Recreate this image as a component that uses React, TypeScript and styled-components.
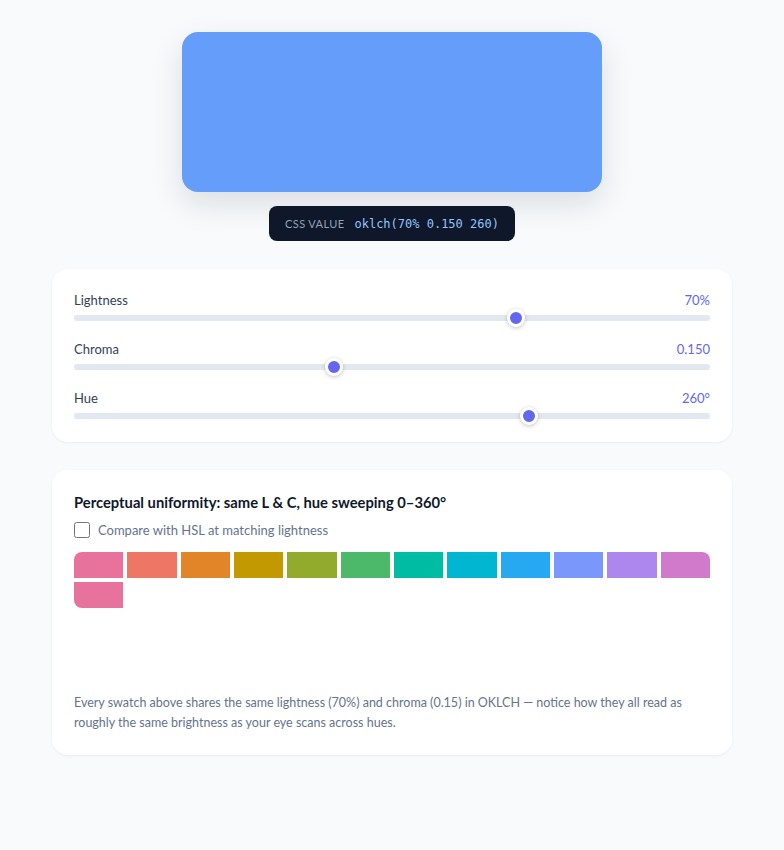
import { useState } from "react";
import styled, { createGlobalStyle } from "styled-components";

const GlobalStyle = createGlobalStyle`
  * {
    box-sizing: border-box;
  }
  body {
    margin: 0;
    background: #f8fafc;
    font-family: Lato, "Noto Sans", sans-serif;
    color: #0f172a;
  }
`;

const Page = styled.main`
  width: 680px;
  margin: 0 auto;
  padding: 32px 0 40px;
  display: flex;
  flex-direction: column;
  align-items: center;
`;

const Preview = styled.div<{ $color: string }>`
  width: 420px;
  height: 160px;
  border-radius: 16px;
  background: ${(p) => p.$color};
  box-shadow: 0 12px 32px rgba(15, 23, 42, 0.12);
`;

const ValueChip = styled.div`
  margin-top: 14px;
  height: 35px;
  padding: 0 16px;
  display: flex;
  align-items: center;
  gap: 10px;
  background: #0f172a;
  border-radius: 8px;
`;

const ChipLabel = styled.span`
  font-size: 11px;
  letter-spacing: 0.4px;
  text-transform: uppercase;
  color: #94a3b8;
`;

const ChipValue = styled.code`
  font-family: "DejaVu Sans Mono", monospace;
  font-size: 12px;
  color: #93c5fd;
`;

const Card = styled.section`
  align-self: stretch;
  margin-top: 28px;
  background: #ffffff;
  border-radius: 16px;
  padding: 22px;
  box-shadow: 0 1px 3px rgba(15, 23, 42, 0.06);
`;

const SliderCard = styled(Card)`
  padding-bottom: 17px;
`;

const SliderList = styled.div`
  display: flex;
  flex-direction: column;
  gap: 13px;
`;

const SliderRow = styled.label`
  display: flex;
  flex-direction: column;
`;

const SliderHead = styled.div`
  display: flex;
  justify-content: space-between;
  align-items: center;
  height: 18px;
  font-size: 13px;
`;

const SliderName = styled.span`
  color: #334155;
`;

const SliderValue = styled.span`
  color: #6366f1;
`;

const Range = styled.input`
  -webkit-appearance: none;
  appearance: none;
  width: 100%;
  height: 18px;
  margin: 0;
  background: transparent;
  cursor: pointer;

  &::-webkit-slider-runnable-track {
    height: 6px;
    border-radius: 3px;
    background: #e2e8f0;
  }
  &::-webkit-slider-thumb {
    -webkit-appearance: none;
    width: 18px;
    height: 18px;
    margin-top: -6px;
    border-radius: 50%;
    background: #6366f1;
    border: 3px solid #ffffff;
    box-shadow: 0 1px 4px rgba(15, 23, 42, 0.25);
  }
`;

const Title = styled.h3`
  margin: 0;
  font-size: 14.75px;
  line-height: 20px;
  font-weight: 700;
  color: #0f172a;
`;

const Toggle = styled.label`
  margin-top: 8px;
  display: flex;
  align-items: center;
  gap: 8px;
  height: 20px;
  font-size: 13px;
  color: #64748b;
  cursor: pointer;
`;

const Check = styled.input`
  width: 16px;
  height: 16px;
  margin: 0;
  accent-color: #6366f1;
`;

const SwatchArea = styled.div`
  margin-top: 12px;
  min-height: 128px;
`;

const SwatchGrid = styled.div`
  display: grid;
  grid-template-columns: repeat(12, 1fr);
  gap: 4px;
  border-radius: 8px;
  overflow: hidden;
`;

const Swatch = styled.div`
  height: 26px;
`;

const Note = styled.p`
  margin: 13px 0 0;
  font-size: 12.5px;
  line-height: 20px;
  color: #64748b;
`;

const hues = Array.from({ length: 13 }, (_, i) => i * 30);

export default function App() {
  const [l, setL] = useState(70);
  const [c, setC] = useState(0.15);
  const [h, setH] = useState(260);
  const [hsl, setHsl] = useState(false);

  const css = `oklch(${l}% ${c.toFixed(3)} ${h})`;

  const swatchColor = (hue: number) =>
    hsl ? `hsl(${hue} 70% ${l}%)` : `oklch(${l}% ${c} ${hue})`;

  return (
    <>
      <GlobalStyle />
      <Page>
        <Preview $color={css} />
        <ValueChip>
          <ChipLabel>CSS value</ChipLabel>
          <ChipValue>{css}</ChipValue>
        </ValueChip>

        <SliderCard>
          <SliderList>
            <SliderRow>
              <SliderHead>
                <SliderName>Lightness</SliderName>
                <SliderValue>{l}%</SliderValue>
              </SliderHead>
              <Range
                type="range"
                min={0}
                max={100}
                value={l}
                onChange={(e) => setL(Number(e.target.value))}
              />
            </SliderRow>
            <SliderRow>
              <SliderHead>
                <SliderName>Chroma</SliderName>
                <SliderValue>{c.toFixed(3)}</SliderValue>
              </SliderHead>
              <Range
                type="range"
                min={0}
                max={0.37}
                step={0.005}
                value={c}
                onChange={(e) => setC(Number(e.target.value))}
              />
            </SliderRow>
            <SliderRow>
              <SliderHead>
                <SliderName>Hue</SliderName>
                <SliderValue>{h}°</SliderValue>
              </SliderHead>
              <Range
                type="range"
                min={0}
                max={360}
                value={h}
                onChange={(e) => setH(Number(e.target.value))}
              />
            </SliderRow>
          </SliderList>
        </SliderCard>

        <Card>
          <Title>Perceptual uniformity: same L &amp; C, hue sweeping 0–360°</Title>
          <Toggle>
            <Check
              type="checkbox"
              checked={hsl}
              onChange={(e) => setHsl(e.target.checked)}
            />
            Compare with HSL at matching lightness
          </Toggle>
          <SwatchArea>
            <SwatchGrid>
              {hues.map((hue) => (
                <Swatch key={hue} style={{ background: swatchColor(hue) }} />
              ))}
            </SwatchGrid>
          </SwatchArea>
          <Note>
            Every swatch above shares the same lightness ({l}%) and chroma (
            {Number(c.toFixed(2))}) in OKLCH — notice how they all read as
            roughly the same brightness as your eye scans across hues.
          </Note>
        </Card>
      </Page>
    </>
  );
}
